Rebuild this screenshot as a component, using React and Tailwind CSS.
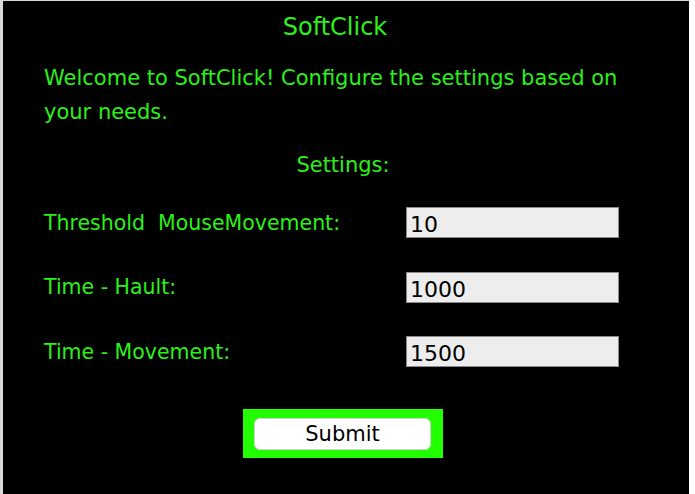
const fields = [
  { label: 'Threshold\u00a0 MouseMovement:', value: '10' },
  { label: 'Time - Hault:', value: '1000' },
  { label: 'Time - Movement:', value: '1500' },
];

const comic = { fontFamily: '"Comic Sans MS", "DejaVu Sans", sans-serif' };
const plain = { fontFamily: '"DejaVu Sans", sans-serif' };

export default function App() {
  return (
    <div className="flex h-[494px] w-[695px] overflow-hidden bg-[#d8d8d8]">
      <div className="ml-[3px] mt-[1px] flex w-[686px] flex-col bg-black text-[#2bf01a]" style={comic}>
        <h1 className="mt-[11px] pr-[22px] text-center text-[24px] leading-[30px]">SoftClick</h1>
        <p className="mt-[19px] pl-[41px] pr-[40px] text-[21px] leading-[34px]">
          Welcome to SoftClick! Configure the settings based on your needs.
        </p>
        <h2 className="mt-[21px] pr-[6px] text-center text-[21px] leading-[30px]">Settings:</h2>
        <div className="mt-[27px] flex flex-col gap-[33.5px] pl-[41px]">
          {fields.map((f) => (
            <div key={f.label} className="flex items-center">
              <span className="w-[362px] text-[20.5px] leading-[30px]">{f.label}</span>
              <input
                readOnly
                value={f.value}
                className="h-[31px] w-[213px] border border-[#8a8a8a] bg-[#ededed] px-[3px] pt-[4px] text-[22px] text-black outline-none"
                style={plain}
              />
            </div>
          ))}
        </div>
        <div className="mt-[42px] flex justify-center pr-[6px]">
          <div className="flex h-[49px] w-[200px] items-center justify-center bg-[#22ff00]">
            <button
              className="mr-[1px] h-[32px] w-[177px] rounded-[6px] border border-[#d0d0d0] bg-white text-[21px] text-black"
              style={plain}
            >
              Submit
            </button>
          </div>
        </div>
      </div>
      <div className="flex-1 bg-white" />
    </div>
  );
}
